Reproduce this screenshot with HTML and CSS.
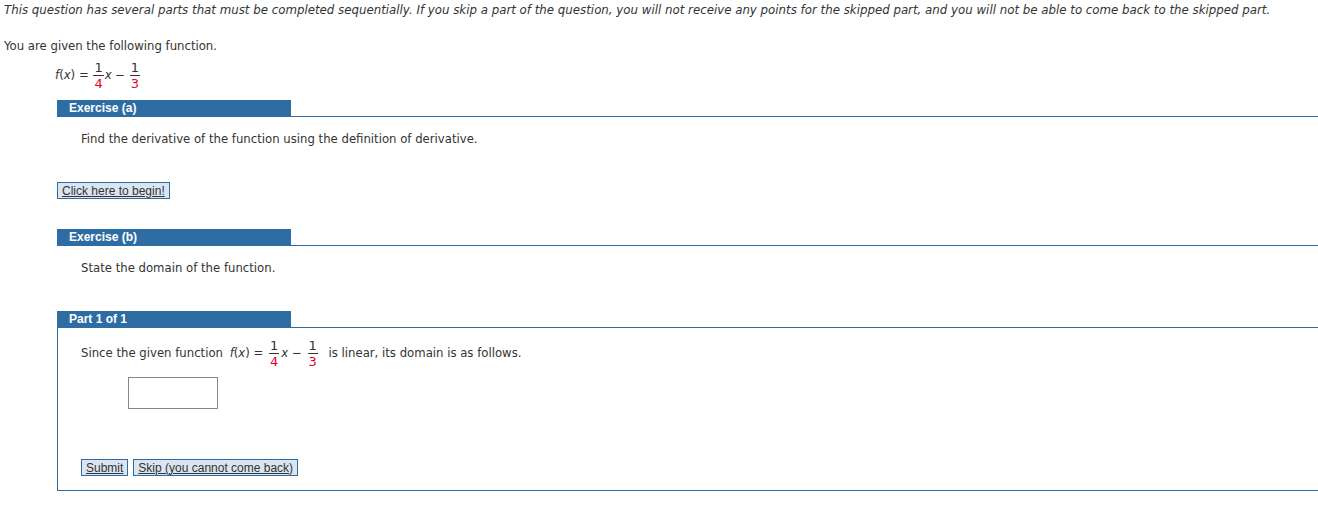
FILE: index.html
```html
<!DOCTYPE html>
<html lang="en">
<head>
    <meta charset="UTF-8">
    <title>Question</title>
    <link rel="stylesheet" href="styles.css">
</head>
<body>
    <p class="intro">This question has several parts that must be completed sequentially. If you skip a part of the question, you will not receive any points for the skipped part, and you will not be able to come back to the skipped part.</p>

    <p class="given">You are given the following function.</p>
    <div class="formula">
        <span class="math"><i>f</i>(<i>x</i>) = <span class="frac"><span class="num">1</span><span class="den">4</span></span><i>x</i> &minus; <span class="frac"><span class="num">1</span><span class="den">3</span></span></span>
    </div>

    <div class="exercise">
        <div class="section-head"><div class="tab">Exercise (a)</div></div>
        <p class="prompt">Find the derivative of the function using the definition of derivative.</p>
        <button class="btn begin">Click here to begin!</button>
    </div>

    <div class="exercise second">
        <div class="section-head"><div class="tab">Exercise (b)</div></div>
        <p class="prompt">State the domain of the function.</p>
    </div>

    <div class="exercise part">
        <div class="section-head"><div class="tab">Part 1 of 1</div></div>
        <div class="part-body">
            <p class="statement">Since the given function <span class="math"><i>f</i>(<i>x</i>) = <span class="frac"><span class="num">1</span><span class="den">4</span></span><i>x</i> &minus; <span class="frac"><span class="num">1</span><span class="den">3</span></span></span> is linear, its domain is as follows.</p>
            <input type="text" class="answer">
            <div class="actions">
                <button class="btn">Submit</button>
                <button class="btn">Skip (you cannot come back)</button>
            </div>
        </div>
    </div>
</body>
</html>
```

FILE: styles.css
```css
body {
    margin: 0;
    padding: 2px 0 0 4px;
    font-family: Verdana, "DejaVu Sans", sans-serif;
    font-size: 11.7px;
    color: #333;
    background: #fff;
}
p {
    margin: 0;
}
.intro {
    font-style: italic;
    font-size: 11.8px;
    line-height: 16px;
    white-space: nowrap;
}
.given {
    margin-top: 20px;
    line-height: 16px;
}
.formula {
    margin: 7px 0 0 51px;
}
.math {
    white-space: nowrap;
}
.statement .math {
    margin: 0 5px 0 3px;
}
.statement .frac {
    margin: 0 2px;
}
.frac {
    display: inline-flex;
    flex-direction: column;
    align-items: center;
    vertical-align: middle;
    font-size: 13px;
    line-height: 13px;
    margin: 0 1px;
}
.num {
    border-bottom: 1px solid #333;
    padding: 0 1px 1px;
}
.den {
    color: #e4002b;
    padding-top: 1px;
}
.exercise {
    margin: 10px 0 0 53px;
}
.section-head {
    border-bottom: 1px solid #2e6da4;
}
.tab {
    width: 222px;
    height: 16px;
    padding-left: 12px;
    background: #2e6da4;
    color: #fff;
    font-family: "Liberation Sans", Arial, sans-serif;
    font-weight: bold;
    font-size: 12px;
    line-height: 17px;
}
.prompt {
    margin: 14px 0 0 24px;
    line-height: 16px;
}
.btn {
    font-family: "Liberation Sans", Arial, sans-serif;
    font-size: 12px;
    color: #333;
    text-decoration: underline;
    background: #dae5f1;
    border: 1px solid #2e6da4;
    padding: 0 4px;
    height: 17px;
    line-height: 14px;
    cursor: pointer;
}
.begin {
    margin-top: 35px;
}
.second {
    margin-top: 30px;
}
.part {
    margin-top: 35px;
}
.part-body {
    border-left: 1px solid #2e6da4;
    border-bottom: 1px solid #2e6da4;
    padding: 11px 0 14px 23px;
}
.answer {
    display: block;
    margin: 9px 0 0 47px;
    width: 90px;
    height: 32px;
    padding: 0;
    box-sizing: border-box;
    border: 1px solid #888;
}
.actions {
    display: flex;
    gap: 5px;
    margin-top: 50px;
}
```
